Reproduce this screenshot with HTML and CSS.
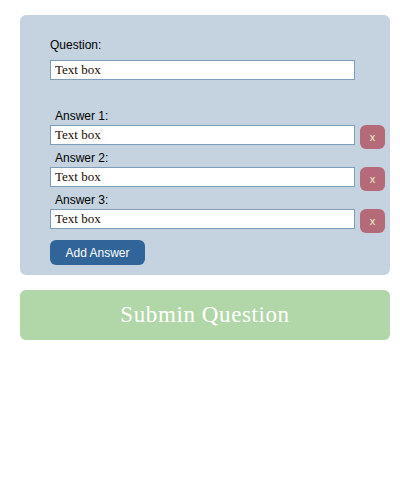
FILE: index.html
```html
<!DOCTYPE html>
<html>
<head>
<meta charset="utf-8">
<link rel="stylesheet" href="styles.css">
</head>
<body>
<div class="card">
  <div class="question">
    <label class="label">Question:</label>
    <input class="text" type="text" value="Text box">
  </div>
  <div class="answers">
    <div class="answer">
      <label class="label alabel">Answer 1:</label>
      <div class="row"><input class="text" type="text" value="Text box"><button class="del">x</button></div>
    </div>
    <div class="answer">
      <label class="label alabel">Answer 2:</label>
      <div class="row"><input class="text" type="text" value="Text box"><button class="del">x</button></div>
    </div>
    <div class="answer">
      <label class="label alabel">Answer 3:</label>
      <div class="row"><input class="text" type="text" value="Text box"><button class="del">x</button></div>
    </div>
  </div>
  <button class="add">Add Answer</button>
</div>
<button class="submit">Submin Question</button>
</body>
</html>
```
FILE: styles.css
```css
html, body {
  margin: 0;
  padding: 0;
  background: #ffffff;
}
body {
  font-family: "Liberation Sans", Arial, sans-serif;
  font-size: 12px;
  color: #000;
}
.card {
  box-sizing: border-box;
  width: 370px;
  margin: 15px 0 0 20px;
  padding: 23px 30px 10px 30px;
  background: #c5d3e0;
  border-radius: 6px;
  display: flex;
  flex-direction: column;
  align-items: flex-start;
}
.label {
  display: block;
  line-height: 14px;
  height: 14px;
}
.question .label {
  margin-bottom: 8px;
}
.alabel {
  padding-left: 5px;
  margin-bottom: 2px;
}
.text {
  box-sizing: border-box;
  width: 305px;
  height: 20px;
  margin: 0;
  padding: 0 4px;
  border: 1px solid #7f9db9;
  background: #fff;
  font-family: "Liberation Serif", "Times New Roman", serif;
  font-size: 13px;
  color: #1a0a00;
  outline: none;
  display: block;
}
.answers {
  margin-top: 29px;
  display: flex;
  flex-direction: column;
}
.answer {
  height: 40px;
  margin-bottom: 2px;
}
.row {
  display: flex;
  align-items: flex-start;
  gap: 5px;
}
.del {
  width: 25px;
  height: 24px;
  margin: 0;
  padding: 0;
  border: none;
  border-radius: 6px;
  background: #b46a78;
  color: #e8f5c8;
  font-family: "Liberation Sans", sans-serif;
  font-size: 11px;
  line-height: 24px;
  text-align: center;
}
.add {
  margin-top: 5px;
  width: 95px;
  height: 25px;
  padding: 0;
  border: none;
  border-radius: 6px;
  background: #31659a;
  color: #fff;
  font-family: "Liberation Sans", Arial, sans-serif;
  font-size: 12px;
  text-align: center;
}
.submit {
  display: block;
  width: 370px;
  height: 50px;
  margin: 15px 0 0 20px;
  border: none;
  border-radius: 6px;
  background: #b1d6a8;
  color: #fff;
  font-family: "Liberation Serif", "Times New Roman", serif;
  font-size: 23px;
  letter-spacing: 0.6px;
  padding: 0;
}
```
